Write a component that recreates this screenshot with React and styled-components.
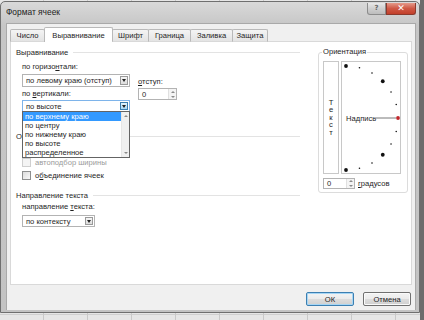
import styled, { createGlobalStyle } from "styled-components";

const GlobalStyle = createGlobalStyle`
  html, body {
    margin: 0;
    padding: 0;
  }
  body {
    width: 424px;
    height: 320px;
    overflow: hidden;
    font-family: "Liberation Sans", Arial, sans-serif;
    font-size: 7.6px;
    color: #1e1e1e;
  }
`;

const Desktop = styled.div`
  width: 424px;
  height: 320px;
  box-sizing: border-box;
  padding-top: 1px;
  background-color: #e6e6e6;
  background-image:
    linear-gradient(to right, #6c6c6c, #6c6c6c),
    repeating-linear-gradient(to right, transparent 0 43px, #c9c9c9 43px 44px),
    repeating-linear-gradient(to bottom, transparent 0 14px, #cfcfcf 14px 15px);
  background-size: 4px 100%, 100% 100%, 100% 100%;
  background-position: right top, 0 0, 0 0;
  background-repeat: no-repeat, repeat, repeat;
`;

const Window = styled.div`
  width: 420px;
  height: 312px;
  box-sizing: border-box;
  border: 1px solid #6f6f6f;
  border-radius: 5px 5px 0 0;
  background: linear-gradient(#d9d9d9, #c6c6c6 24px, #c3c3c3);
  display: flex;
  flex-direction: column;
`;

const TitleBar = styled.div`
  height: 21px;
  display: flex;
  justify-content: space-between;
  align-items: flex-start;
  padding-left: 5px;
  flex-shrink: 0;
`;

const Title = styled.span`
  font-size: 8.4px;
  line-height: 21px;
  color: #222;
`;

const Caption = styled.div`
  display: flex;
  margin-top: 1px;
  margin-right: 3px;
`;

const CapButton = styled.div`
  width: ${(p) => p.w}px;
  height: 12px;
  box-sizing: border-box;
  border: 1px solid ${(p) => (p.close ? "#8b3a2e" : "#8c8c8c")};
  border-top: none;
  border-radius: ${(p) => (p.close ? "0 0 3px 0" : "0 0 0 3px")};
  background: ${(p) =>
    p.close
      ? "linear-gradient(#e59a8a, #cf5845 50%, #c2402b)"
      : "linear-gradient(#e8e8e8, #cfcfcf 50%, #bdbdbd)"};
  color: ${(p) => (p.close ? "#fff" : "#666")};
  font-family: "DejaVu Sans", sans-serif;
  font-size: ${(p) => (p.close ? 9 : 7)}px;
  font-weight: bold;
  line-height: 11px;
  text-align: center;
`;

const Client = styled.div`
  flex: 1;
  margin: 0 3px 2px 5px;
  background: #f0f0f0;
  border: 1px solid #a9a9a9;
  border-bottom: none;
  padding: 3px 3px 0 3px;
  display: flex;
  flex-direction: column;
`;

const TabRow = styled.div`
  display: flex;
  align-items: flex-end;
  height: 15px;
  position: relative;
  z-index: 1;
  margin-bottom: -1px;
`;

const Tab = styled.div`
  width: ${(p) => p.w}px;
  height: ${(p) => (p.active ? 15 : 13)}px;
  box-sizing: border-box;
  border: 1px solid #b9b9b9;
  border-bottom: ${(p) => (p.active ? "none" : "1px solid #d9d9d9")};
  margin-left: ${(p) => (p.first ? 0 : -1)}px;
  background: ${(p) => (p.active ? "#fff" : "linear-gradient(#f4f4f4, #e4e4e4)")};
  display: flex;
  align-items: center;
  justify-content: center;
  color: #1e1e1e;
  border-radius: 2px 2px 0 0;
`;

const Panel = styled.div`
  height: 244px;
  box-sizing: border-box;
  background: #fff;
  border: 1px solid #d9d9d9;
  padding: 5px 3px 0 5px;
  display: grid;
  grid-template-columns: 284px 90px;
  column-gap: 18px;
  align-items: start;
`;

const Column = styled.div`
  display: flex;
  flex-direction: column;
`;

const GroupHeader = styled.div`
  display: flex;
  align-items: center;
  height: 10px;
  margin-top: ${(p) => p.mt || 0}px;
  color: #1e1e1e;
  &::after {
    content: "";
    flex: 1;
    height: 1px;
    background: #e3e3e3;
    margin-left: 5px;
  }
`;

const Indent = styled.div`
  padding-left: 6px;
  display: flex;
  flex-direction: column;
`;

const Label = styled.div`
  height: 10px;
  line-height: 10px;
  margin-top: ${(p) => p.mt || 0}px;
  color: ${(p) => (p.disabled ? "#9a9a9a" : "#1e1e1e")};
  white-space: nowrap;
`;

const FieldRow = styled.div`
  display: flex;
  gap: 8px;
  margin-top: 3px;
`;

const SubColumn = styled.div`
  display: flex;
  flex-direction: column;
  padding-top: ${(p) => p.pt || 0}px;
`;

const Select = styled.div`
  position: relative;
  width: ${(p) => p.w}px;
  height: ${(p) => p.h || 13}px;
  margin-top: ${(p) => p.mt || 0}px;
  box-sizing: border-box;
  border: 1px solid ${(p) => (p.open ? "#7eb4ea" : "#b3b3b3")};
  background: #fff;
  display: flex;
  align-items: center;
  padding-left: 3px;
  white-space: nowrap;
`;

const SelectValue = styled.span`
  flex: 1;
`;

const ArrowButton = styled.div`
  width: 8px;
  height: calc(100% - 2px);
  margin-right: 1px;
  box-sizing: border-box;
  border: 1px solid ${(p) => (p.open ? "#3c7fb1" : "#9a9a9a")};
  background: ${(p) =>
    p.open ? "linear-gradient(#e5f4fc, #a9d9f6)" : "linear-gradient(#f6f6f6, #dcdcdc)"};
  display: flex;
  align-items: center;
  justify-content: center;
  &::after {
    content: "";
    border-left: 2.5px solid transparent;
    border-right: 2.5px solid transparent;
    border-top: 3px solid #222;
  }
`;

const DropList = styled.div`
  position: absolute;
  left: -1px;
  top: 100%;
  width: 108px;
  height: 47px;
  box-sizing: border-box;
  border: 1px solid #646464;
  background: #fff;
  display: flex;
  z-index: 2;
`;

const Options = styled.div`
  flex: 1;
  display: flex;
  flex-direction: column;
`;

const Option = styled.div`
  height: 9px;
  line-height: 9px;
  padding-left: 2px;
  background: ${(p) => (p.selected ? "#3399ff" : "transparent")};
  color: ${(p) => (p.selected ? "#fff" : "#1e1e1e")};
`;

const ScrollBar = styled.div`
  width: 8px;
  background: #f0f0f0;
  border-left: 1px solid #e6e6e6;
  display: flex;
  flex-direction: column;
  justify-content: space-between;
  align-items: center;
  padding: 3px 0;
  box-sizing: border-box;
`;

const ScrollArrow = styled.div`
  border-left: 2px solid transparent;
  border-right: 2px solid transparent;
  ${(p) =>
    p.down ? "border-top: 2px solid #8a8a8a;" : "border-bottom: 2px solid #8a8a8a;"}
`;

const Spin = styled.div`
  width: ${(p) => p.w}px;
  height: ${(p) => p.h}px;
  box-sizing: border-box;
  border: 1px solid #b3b3b3;
  background: #fff;
  display: flex;
  align-items: center;
  padding-left: 3px;
  margin-top: ${(p) => p.mt || 0}px;
`;

const SpinButtons = styled.div`
  width: 7px;
  height: 100%;
  border-left: 1px solid #e0e0e0;
  background: #f4f4f4;
  display: flex;
  flex-direction: column;
  justify-content: space-around;
  align-items: center;
  margin-left: auto;
`;

const Check = styled.div`
  display: flex;
  align-items: center;
  height: 13px;
  margin-top: ${(p) => p.mt || 0}px;
  gap: 4px;
  color: ${(p) => (p.disabled ? "#9a9a9a" : "#1e1e1e")};
  white-space: nowrap;
  &::before {
    content: "";
    width: 9px;
    height: 9px;
    box-sizing: border-box;
    border: 1px solid ${(p) => (p.disabled ? "#cfcfcf" : "#8e8f8f")};
    background: ${(p) =>
      p.disabled ? "#f4f4f4" : "linear-gradient(135deg, #dcdcdc, #f8f8f8)"};
  }
`;

const OrientBox = styled.fieldset`
  margin: 0;
  height: 146px;
  box-sizing: border-box;
  border: 1px solid #dcdcdc;
  border-radius: 3px;
  padding: 0 5px 0 4px;
  display: flex;
  flex-direction: column;
`;

const Legend = styled.legend`
  padding: 0 1px;
  margin-left: -1px;
  height: 10px;
  line-height: 10px;
  color: #1e1e1e;
`;

const DialRow = styled.div`
  display: flex;
  gap: 2px;
  margin-top: 4px;
`;

const VerticalText = styled.div`
  width: 16px;
  height: 113px;
  box-sizing: border-box;
  border: 1px solid #c8c8c8;
  display: flex;
  flex-direction: column;
  align-items: center;
  justify-content: center;
  line-height: 7.6px;
`;

const Dial = styled.div`
  width: 60px;
  height: 113px;
  box-sizing: border-box;
  border: 1px solid #c8c8c8;
`;

const DegreeRow = styled.div`
  display: flex;
  align-items: center;
  gap: 3px;
  margin-top: 4px;
`;

const Footer = styled.div`
  display: flex;
  justify-content: flex-end;
  gap: 9px;
  margin-top: 7px;
  padding-right: 1px;
`;

const Button = styled.div`
  width: 48px;
  height: 14px;
  box-sizing: border-box;
  border: 1px solid ${(p) => (p.primary ? "#3c7fb1" : "#707070")};
  border-radius: 2px;
  box-shadow: ${(p) => (p.primary ? "inset 0 0 0 1px #a6d6f5" : "inset 0 0 0 1px #fafafa")};
  background: linear-gradient(#f3f3f3, #ebebeb 50%, #dddddd 51%, #cfcfcf);
  display: flex;
  align-items: center;
  justify-content: center;
  color: #1e1e1e;
`;

const tabs = [
  ["Число", 35],
  ["Выравнивание", 69],
  ["Шрифт", 37],
  ["Граница", 43],
  ["Заливка", 43],
  ["Защита", 36],
];

const vertOptions = ["по верхнему краю", "по центру", "по нижнему краю", "по высоте", "распределенное"];

function DialDrawing() {
  const cx = 4;
  const cy = 56;
  const r = 52;
  const dots = [];
  for (let a = 90; a >= -90; a -= 15) {
    const rad = (a * Math.PI) / 180;
    const big = a % 45 === 0;
    dots.push(
      <circle
        key={a}
        cx={cx + r * Math.cos(rad)}
        cy={cy - r * Math.sin(rad)}
        r={big ? 1.9 : 0.8}
        fill={a === 0 ? "#c0262a" : "#111"}
      />
    );
  }
  return (
    <svg width="58" height="111" viewBox="0 0 58 111">
      <text x="4" y="59" fontSize="7.6" fontFamily="Liberation Sans, Arial, sans-serif" fill="#1e1e1e">
        Надпись
      </text>
      <line x1="32" y1="56" x2="54" y2="56" stroke="#555" strokeWidth="0.8" />
      {dots}
    </svg>
  );
}

function SpinArrows() {
  return (
    <SpinButtons>
      <ScrollArrow />
      <ScrollArrow down />
    </SpinButtons>
  );
}

export default function App() {
  return (
    <>
      <GlobalStyle />
      <Desktop>
        <Window>
          <TitleBar>
            <Title>Формат ячеек</Title>
            <Caption>
              <CapButton w={19}>?</CapButton>
              <CapButton w={30} close>
                ✕
              </CapButton>
            </Caption>
          </TitleBar>
          <Client>
            <TabRow>
              {tabs.map(([name, w], i) => (
                <Tab key={name} w={w} first={i === 0} active={i === 1}>
                  {name}
                </Tab>
              ))}
            </TabRow>
            <Panel>
              <Column>
                <GroupHeader>Выравнивание</GroupHeader>
                <Indent>
                  <FieldRow>
                    <SubColumn>
                      <Label mt={2}>
                        по горизо<u>н</u>тали:
                      </Label>
                      <Select w={108} mt={2}>
                        <SelectValue>по левому краю (отступ)</SelectValue>
                        <ArrowButton />
                      </Select>
                      <Label mt={2}>
                        по <u>в</u>ертикали:
                      </Label>
                      <Select w={108} mt={1} h={12} open>
                        <SelectValue>по высоте</SelectValue>
                        <ArrowButton open />
                        <DropList>
                          <Options>
                            {vertOptions.map((o, i) => (
                              <Option key={o} selected={i === 0}>
                                {o}
                              </Option>
                            ))}
                          </Options>
                          <ScrollBar>
                            <ScrollArrow />
                            <ScrollArrow down />
                          </ScrollBar>
                        </DropList>
                      </Select>
                    </SubColumn>
                    <SubColumn pt={17}>
                      <Label>
                        <u>о</u>тступ:
                      </Label>
                      <Spin w={39} h={12} mt={1}>
                        0
                        <SpinArrows />
                      </Spin>
                    </SubColumn>
                  </FieldRow>
                </Indent>
                <GroupHeader mt={19}>Отображение</GroupHeader>
                <Indent>
                  <Check mt={2}>переносить по словам</Check>
                  <Check disabled>автоподбор ширины</Check>
                  <Check>
                    <span>
                      о<u>б</u>ъединение ячеек
                    </span>
                  </Check>
                </Indent>
                <GroupHeader mt={8}>Направление текста</GroupHeader>
                <Indent>
                  <Label mt={2}>
                    направление <u>т</u>екста:
                  </Label>
                  <Select w={73} h={12} mt={3}>
                    <SelectValue>по контексту</SelectValue>
                    <ArrowButton />
                  </Select>
                </Indent>
              </Column>
              <OrientBox>
                <Legend>Ориентация</Legend>
                <DialRow>
                  <VerticalText>
                    <span>Т</span>
                    <span>е</span>
                    <span>к</span>
                    <span>с</span>
                    <span>т</span>
                  </VerticalText>
                  <Dial>
                    <DialDrawing />
                  </Dial>
                </DialRow>
                <DegreeRow>
                  <Spin w={32} h={11}>
                    0
                    <SpinArrows />
                  </Spin>
                  <span>
                    <u>г</u>радусов
                  </span>
                </DegreeRow>
              </OrientBox>
            </Panel>
            <Footer>
              <Button primary>ОК</Button>
              <Button>Отмена</Button>
            </Footer>
          </Client>
        </Window>
      </Desktop>
    </>
  );
}
